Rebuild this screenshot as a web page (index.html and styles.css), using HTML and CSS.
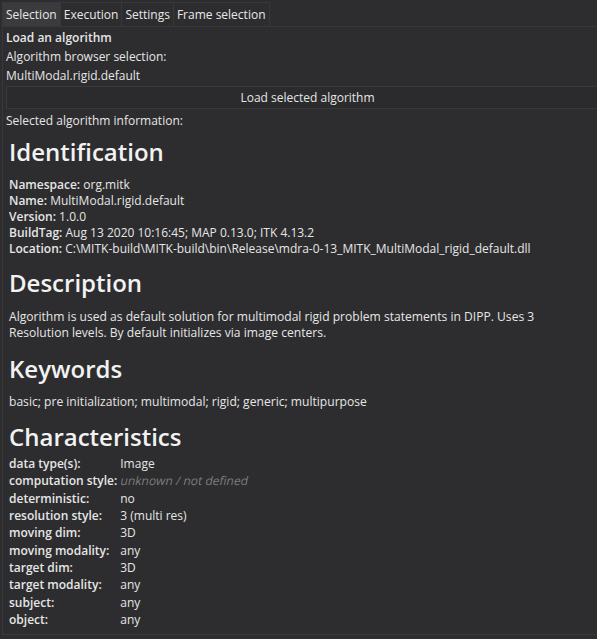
FILE: index.html
```html
<!DOCTYPE html>
<html>
<head>
<meta charset="utf-8">
<link rel="stylesheet" href="styles.css">
</head>
<body>
<div class="tabs">
  <div class="tab active">Selection</div>
  <div class="tab">Execution</div>
  <div class="tab">Settings</div>
  <div class="tab">Frame selection</div>
</div>
<div class="pane">
  <div class="line bold">Load an algorithm</div>
  <div class="line">Algorithm browser selection:</div>
  <div class="line">MultiModal.rigid.default</div>
  <div class="button">Load selected algorithm</div>
  <div class="line">Selected algorithm information:</div>
  <div class="info">
    <h1 class="h-first">Identification</h1>
    <div class="rows">
      <div><b>Namespace:</b> org.mitk</div>
      <div><b>Name:</b> MultiModal.rigid.default</div>
      <div><b>Version:</b> 1.0.0</div>
      <div><b>BuildTag:</b> Aug 13 2020 10:16:45; MAP 0.13.0; ITK 4.13.2</div>
      <div><b>Location:</b> C:\MITK-build\MITK-build\bin\Release\mdra-0-13_MITK_MultiModal_rigid_default.dll</div>
    </div>
    <h1>Description</h1>
    <p class="para para-desc">Algorithm is used as default solution for multimodal rigid problem statements in DIPP. Uses 3 Resolution levels. By default initializes via image centers.</p>
    <h1 class="h-kw">Keywords</h1>
    <p class="para para-kw">basic; pre initialization; multimodal; rigid; generic; multipurpose</p>
    <h1 class="h-char">Characteristics</h1>
    <table class="chars">
      <tr><th>data type(s):</th><td>Image</td></tr>
      <tr><th>computation style:</th><td><span class="muted">unknown / not defined</span></td></tr>
      <tr><th>deterministic:</th><td>no</td></tr>
      <tr><th>resolution style:</th><td>3 (multi res)</td></tr>
      <tr><th>moving dim:</th><td>3D</td></tr>
      <tr><th>moving modality:</th><td>any</td></tr>
      <tr><th>target dim:</th><td>3D</td></tr>
      <tr><th>target modality:</th><td>any</td></tr>
      <tr><th>subject:</th><td>any</td></tr>
      <tr><th>object:</th><td>any</td></tr>
    </table>
  </div>
</div>
</body>
</html>
```

FILE: styles.css
```css
html, body {
  margin: 0;
  padding: 0;
  background: #2d2d2f;
  color: #e6e6e6;
  font-family: "Open Sans", "Noto Sans", sans-serif;
  font-size: 12px;
  height: 100%;
}
body {
  overflow: hidden;
}
b {
  font-weight: 600;
}
.tabs {
  display: flex;
  padding: 2px 0 0 2px;
}
.tab {
  height: 23px;
  line-height: 23px;
  padding: 0 3px;
  font-size: 12px;
  color: #e8e8e8;
  border: 1px solid #38383a;
  border-bottom: none;
  border-left: none;
}
.tab:first-child {
  border-left: 1px solid #38383a;
}
.tab.active {
  background: #3b3b3d;
}
.pane {
  margin: 0 0 0 2px;
  border-top: 1px solid #38383a;
  border-left: 1px solid #38383a;
  border-bottom: 1px solid #38383a;
  height: 609px;
  padding: 0 0 0 3px;
  box-sizing: border-box;
}
.line {
  height: 19px;
  line-height: 19px;
  font-size: 12px;
}
.line.bold {
  font-weight: 600;
  margin-top: 1px;
}
.button {
  margin: 1px -12px 2px 0;
  height: 21px;
  line-height: 21px;
  text-align: center;
  font-size: 12px;
  border: 1px solid #39393b;
  background: #2b2b2d;
}
.info {
  padding-left: 3px;
}
h1 {
  font-size: 24px;
  font-weight: 600;
  margin: 10px 0 10px 0;
  line-height: 32px;
  color: #f2f2f2;
}
h1.h-first {
  margin-top: 6px;
  margin-bottom: 9px;
}
h1.h-kw {
  margin-bottom: 9px;
}
.rows {
  margin-bottom: 1px;
}
.rows div {
  line-height: 16px;
  height: 16px;
  white-space: nowrap;
}
.para {
  margin: 0;
  line-height: 16px;
  width: 570px;
  font-size: 12.1px;
}
.para-desc {
  margin-bottom: 12px;
}
.para-kw {
  margin-bottom: 11px;
}
h1.h-char {
  margin-bottom: 2px;
}
.chars {
  border-collapse: collapse;
}
.chars th {
  text-align: left;
  font-weight: 600;
  padding: 0 3px 0 0;
  height: 17.33px;
  line-height: 17px;
  white-space: nowrap;
}
.chars td {
  padding: 0;
  line-height: 17px;
}
.chars .muted {
  display: inline-block;
  transform: skewX(-12deg);
  transform-origin: 0 70%;
  color: #7c7c7e;
  white-space: nowrap;
}
```
